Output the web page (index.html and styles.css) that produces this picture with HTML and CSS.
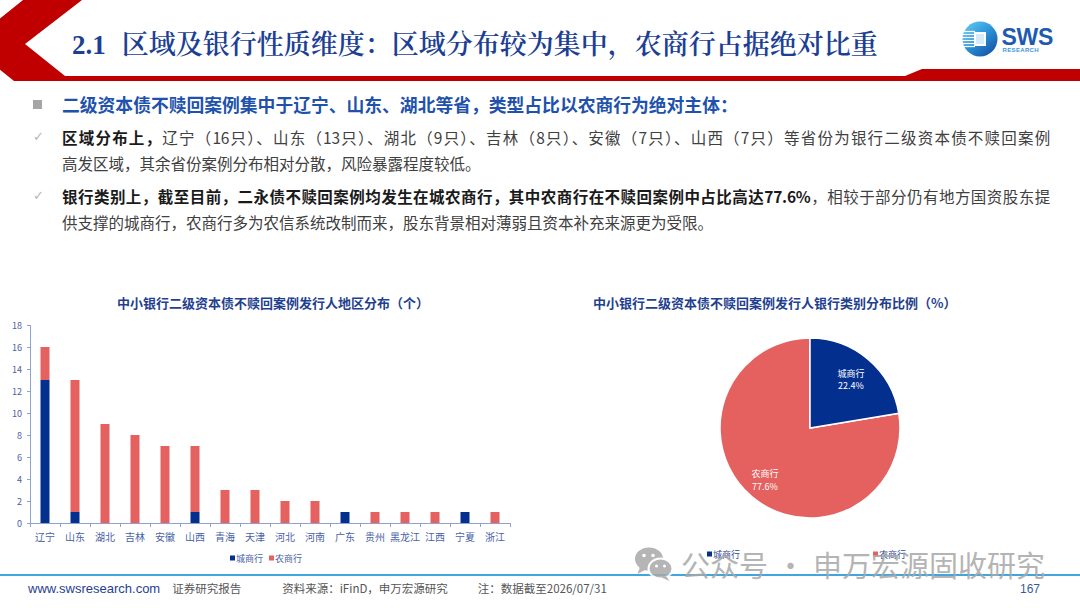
FILE: index.html
```html
<!DOCTYPE html>
<html lang="zh-CN">
<head>
<meta charset="utf-8">
<title>2.1 区域及银行性质维度</title>
<link rel="stylesheet" href="styles.css">
</head>
<body>
<div class="page">
  <header class="hdr">
    <svg class="hdr-bg" viewBox="0 0 1080 82" width="1080" height="82">
      <polygon points="23,0 82,0 25,44 65,76 905,76 922,69 1080,69 1080,81 14,81 -32,44" fill="#c00000"/>
    </svg>
    <h1 class="title"><span class="num">2.1</span>区域及银行性质维度：区域分布较为集中，农商行占据绝对比重</h1>
    <div class="logo">
      <svg class="logo-mark" viewBox="0 0 36 36" width="36" height="36">
        <defs>
          <linearGradient id="lgc" x1="0" y1="0" x2="0.8" y2="1">
            <stop offset="0" stop-color="#62d2f6"/>
            <stop offset="0.55" stop-color="#2a8fd6"/>
            <stop offset="1" stop-color="#1553a6"/>
          </linearGradient>
        </defs>
        <circle cx="18" cy="18" r="17.5" fill="url(#lgc)"/>
        <g stroke="#ffffff" stroke-width="1.3">
          <line x1="0" y1="10.5" x2="13" y2="10.5"/>
          <line x1="0" y1="13.5" x2="13" y2="13.5"/>
          <line x1="0" y1="16.5" x2="13" y2="16.5"/>
          <line x1="0" y1="19.5" x2="13" y2="19.5"/>
          <line x1="0" y1="22.5" x2="13" y2="22.5"/>
          <line x1="0" y1="25.5" x2="13" y2="25.5"/>
        </g>
        <rect x="12" y="11" width="12" height="14" fill="#ffffff"/>
        <rect x="14" y="13" width="8" height="10" fill="#d6ebfa"/>
      </svg>
      <div class="logo-text">
        <span class="sws">SWS</span>
        <span class="research">RESEARCH</span>
      </div>
    </div>
  </header>

  <section class="points">
    <div class="pt pt-head">
      <span class="mk sq"></span>
      <p class="txt lead">二级资本债不赎回案例集中于辽宁、山东、湖北等省，类型占比以农商行为绝对主体：</p>
    </div>
    <div class="pt">
      <span class="mk ck">✓</span>
      <p class="txt"><span class="ln"><b>区域分布上，</b>辽宁（16只）、山东（13只）、湖北（9只）、吉林（8只）、安徽（7只）、山西（7只）等省份为银行二级资本债不赎回案例</span>高发区域，其余省份案例分布相对分散，风险暴露程度较低。</p>
    </div>
    <div class="pt">
      <span class="mk ck">✓</span>
      <p class="txt"><span class="ln"><b>银行类别上，截至目前，二永债不赎回案例均发生在城农商行，其中农商行在不赎回案例中占比高达77.6%</b>，相较于部分仍有地方国资股东提</span>供支撑的城商行，农商行多为农信系统改制而来，股东背景相对薄弱且资本补充来源更为受限。</p>
    </div>
  </section>

  <section class="charts">
    <div class="chart bar">
      <div class="ctitle">中小银行二级资本债不赎回案例发行人地区分布（个）</div>
      <svg viewBox="0 0 540 256" width="540" height="256">
        <g class="axis">
          <line x1="30.5" y1="12" x2="30.5" y2="210.5"/>
          <line x1="30" y1="210.5" x2="510" y2="210.5"/>
          <line x1="27" y1="210.5" x2="30" y2="210.5"/>
          <line x1="27" y1="188.5" x2="30" y2="188.5"/>
          <line x1="27" y1="166.5" x2="30" y2="166.5"/>
          <line x1="27" y1="144.5" x2="30" y2="144.5"/>
          <line x1="27" y1="122.5" x2="30" y2="122.5"/>
          <line x1="27" y1="100.5" x2="30" y2="100.5"/>
          <line x1="27" y1="78.5" x2="30" y2="78.5"/>
          <line x1="27" y1="56.5" x2="30" y2="56.5"/>
          <line x1="27" y1="34.5" x2="30" y2="34.5"/>
          <line x1="27" y1="12.5" x2="30" y2="12.5"/>
          <line x1="30.5" y1="210" x2="30.5" y2="214"/>
          <line x1="60.5" y1="210" x2="60.5" y2="214"/>
          <line x1="90.5" y1="210" x2="90.5" y2="214"/>
          <line x1="120.5" y1="210" x2="120.5" y2="214"/>
          <line x1="150.5" y1="210" x2="150.5" y2="214"/>
          <line x1="180.5" y1="210" x2="180.5" y2="214"/>
          <line x1="210.5" y1="210" x2="210.5" y2="214"/>
          <line x1="240.5" y1="210" x2="240.5" y2="214"/>
          <line x1="270.5" y1="210" x2="270.5" y2="214"/>
          <line x1="300.5" y1="210" x2="300.5" y2="214"/>
          <line x1="330.5" y1="210" x2="330.5" y2="214"/>
          <line x1="360.5" y1="210" x2="360.5" y2="214"/>
          <line x1="390.5" y1="210" x2="390.5" y2="214"/>
          <line x1="420.5" y1="210" x2="420.5" y2="214"/>
          <line x1="450.5" y1="210" x2="450.5" y2="214"/>
          <line x1="480.5" y1="210" x2="480.5" y2="214"/>
          <line x1="510.5" y1="210" x2="510.5" y2="214"/>
        </g>
        <g class="ylab">
          <text x="22" y="210">0</text>
          <text x="22" y="188">2</text>
          <text x="22" y="166">4</text>
          <text x="22" y="144">6</text>
          <text x="22" y="122">8</text>
          <text x="22" y="100">10</text>
          <text x="22" y="78">12</text>
          <text x="22" y="56">14</text>
          <text x="22" y="34">16</text>
          <text x="22" y="12">18</text>
        </g>
        <g class="red">
          <rect x="40.5" y="34" width="9" height="33"/>
          <rect x="70.5" y="67" width="9" height="132"/>
          <rect x="100.5" y="111" width="9" height="99"/>
          <rect x="130.5" y="122" width="9" height="88"/>
          <rect x="160.5" y="133" width="9" height="77"/>
          <rect x="190.5" y="133" width="9" height="66"/>
          <rect x="220.5" y="177" width="9" height="33"/>
          <rect x="250.5" y="177" width="9" height="33"/>
          <rect x="280.5" y="188" width="9" height="22"/>
          <rect x="310.5" y="188" width="9" height="22"/>
          <rect x="370.5" y="199" width="9" height="11"/>
          <rect x="400.5" y="199" width="9" height="11"/>
          <rect x="430.5" y="199" width="9" height="11"/>
          <rect x="490.5" y="199" width="9" height="11"/>
        </g>
        <g class="blue">
          <rect x="40.5" y="67" width="9" height="143"/>
          <rect x="70.5" y="199" width="9" height="11"/>
          <rect x="190.5" y="199" width="9" height="11"/>
          <rect x="340.5" y="199" width="9" height="11"/>
          <rect x="460.5" y="199" width="9" height="11"/>
        </g>
        <g class="xlab">
          <text x="45" y="223">辽宁</text>
          <text x="75" y="223">山东</text>
          <text x="105" y="223">湖北</text>
          <text x="135" y="223">吉林</text>
          <text x="165" y="223">安徽</text>
          <text x="195" y="223">山西</text>
          <text x="225" y="223">青海</text>
          <text x="255" y="223">天津</text>
          <text x="285" y="223">河北</text>
          <text x="315" y="223">河南</text>
          <text x="345" y="223">广东</text>
          <text x="375" y="223">贵州</text>
          <text x="405" y="223">黑龙江</text>
          <text x="435" y="223">江西</text>
          <text x="465" y="223">宁夏</text>
          <text x="495" y="223">浙江</text>
        </g>
        <g class="legend">
          <rect class="blue" x="230" y="242.5" width="5" height="5"/>
          <text x="236" y="245">城商行</text>
          <rect class="red" x="269" y="242.5" width="5" height="5"/>
          <text x="275" y="245">农商行</text>
        </g>
      </svg>
    </div>
    <div class="chart pie">
      <div class="ctitle">中小银行二级资本债不赎回案例发行人银行类别分布比例（%）</div>
      <svg viewBox="0 0 540 256" width="540" height="256">
        <path class="red slice" d="M270,115 L358.8,100.36 A90,90 0 1 1 270,25 Z"/>
        <path class="blue slice" d="M270,115 L270,25 A90,90 0 0 1 358.8,100.36 Z"/>
        <g class="plab">
          <text x="311" y="60">城商行</text>
          <text x="311" y="72">22.4%</text>
          <text x="225" y="160">农商行</text>
          <text x="225" y="173">77.6%</text>
        </g>
        <g class="legend pleg">
          <rect class="blue" x="167" y="238.5" width="5" height="5"/>
          <text x="173" y="241">城商行</text>
          <rect class="red" x="333" y="238.5" width="5" height="5"/>
          <text x="339" y="241">农商行</text>
        </g>
      </svg>
    </div>
  </section>

  <footer class="ftr">
    <span class="url">www.swsresearch.com</span>
    <span class="ft rpt">证券研究报告</span>
    <span class="ft src">资料来源：iFinD，申万宏源研究</span>
    <span class="ft note">注：数据截至2026/07/31</span>
    <span class="pg">167</span>
  </footer>

  <div class="wm">
    <svg class="wm-icon" viewBox="0 0 40 36" width="40" height="36">
      <ellipse cx="15" cy="13" rx="14" ry="11.5" fill="#a9a9a9"/>
      <path d="M6 21 L3.5 28 L12 23.5 Z" fill="#a9a9a9"/>
      <ellipse cx="26.5" cy="22.5" rx="12" ry="10" fill="#a9a9a9" stroke="#ffffff" stroke-width="2"/>
      <path d="M32 30 L35.5 35 L27.5 31.5 Z" fill="#a9a9a9"/>
      <circle cx="10" cy="9.5" r="1.8" fill="#ffffff"/>
      <circle cx="19" cy="9.5" r="1.8" fill="#ffffff"/>
      <circle cx="22.5" cy="20" r="1.5" fill="#ffffff"/>
      <circle cx="30.5" cy="20" r="1.5" fill="#ffffff"/>
    </svg>
    <span class="wm-text">公众号<span class="dot">·</span>申万宏源固收研究</span>
  </div>
</div>
</body>
</html>
```

FILE: styles.css
```css
html, body {
  margin: 0;
  padding: 0;
  background: #ffffff;
}

body {
  font-family: "Noto Sans CJK SC", "Noto Sans", sans-serif;
}

.page {
  width: 1080px;
  height: 608px;
  position: relative;
  overflow: hidden;
  background: #ffffff;
}

/* Header */
.hdr {
  position: relative;
  height: 82px;
  display: flex;
  align-items: flex-start;
}

.hdr-bg {
  position: absolute;
  left: 0;
  top: 0;
  display: block;
}

.title {
  position: relative;
  margin: 27px 0 0 72px;
  font-family: "Liberation Serif", "Noto Serif CJK SC", "Noto Sans CJK SC", serif;
  font-weight: 600;
  font-size: 27px;
  line-height: 36px;
  color: #1c3f94;
  white-space: nowrap;
}

.title .num {
  margin-right: 16px;
}

.logo {
  position: relative;
  margin: 21px 27px 0 auto;
  display: flex;
  align-items: center;
  gap: 4px;
}

.logo-mark {
  display: block;
}

.logo-text {
  display: flex;
  flex-direction: column;
  margin-top: 2px;
}

.sws {
  font-family: "Liberation Sans", Arial, sans-serif;
  font-weight: 700;
  font-size: 23px;
  line-height: 18px;
  padding-top: 2px;
  color: #1e5bb0;
  letter-spacing: -0.3px;
}

.research {
  font-family: "Liberation Sans", Arial, sans-serif;
  font-weight: 700;
  font-size: 6px;
  line-height: 7px;
  margin-top: 1px;
  color: #3d95dc;
  letter-spacing: 0.35px;
  margin-left: 1px;
}

/* Bullet points */
.points {
  margin: 9px 30px 0 30px;
}

.pt {
  display: flex;
  margin-top: 7px;
}

.pt-head {
  margin-top: 0;
  margin-bottom: 3px;
}

.mk {
  flex: none;
  width: 32px;
}

.sq::before {
  content: "";
  display: block;
  width: 9px;
  height: 9px;
  margin: 9px 0 0 3px;
  background: #a6a6a6;
}

.ck {
  font-family: "DejaVu Sans", sans-serif;
  font-size: 13px;
  line-height: 26px;
  color: #b5b5b5;
  padding-left: 3px;
  box-sizing: border-box;
}

.txt {
  flex: 1;
  margin: 0;
  font-size: 15.5px;
  line-height: 26px;
  color: #404040;
  text-align: justify;
}

.txt b {
  font-weight: 700;
  color: #1a1a1a;
}

.txt .ln {
  display: block;
  text-align: justify;
  text-align-last: justify;
  letter-spacing: -0.2px;
}

.txt.lead {
  font-size: 17.8px;
  font-weight: 700;
  color: #2152ab;
  white-space: nowrap;
}

/* Charts */
.charts {
  display: grid;
  grid-template-columns: 540px 540px;
  margin-top: 58px;
}

.chart svg {
  display: block;
}

.ctitle {
  font-size: 13px;
  font-weight: 700;
  line-height: 20px;
  color: #1f3f8f;
  white-space: nowrap;
}

.bar .ctitle {
  text-align: center;
  padding-left: 6px;
}

.pie .ctitle {
  padding-left: 53px;
}

.axis line {
  stroke: #8ea3d3;
  stroke-width: 1;
}

.chart text {
  font-family: "Noto Sans CJK SC", "Liberation Sans", sans-serif;
}

.ylab text {
  font-size: 9px;
  fill: #4862a6;
  text-anchor: end;
  dominant-baseline: central;
}

.xlab text {
  font-size: 10px;
  fill: #4862a6;
  text-anchor: middle;
  dominant-baseline: central;
}

.red,
.red rect {
  fill: #e46160;
}

.blue,
.blue rect {
  fill: #03308f;
}

.legend text {
  font-size: 9px;
  fill: #4862a6;
  dominant-baseline: central;
}

.pleg text {
  fill: #2d4c9a;
}

.slice {
  stroke: #ffffff;
  stroke-width: 1.5;
  stroke-linejoin: miter;
}

.plab text {
  font-size: 9px;
  fill: #ffffff;
  text-anchor: middle;
  dominant-baseline: central;
}

/* Footer */
.ftr {
  margin-top: 5px;
  border-top: 2px solid #3fa7dd;
  display: flex;
  align-items: baseline;
  padding: 4px 40px 0 28px;
  line-height: 16px;
}

.url {
  font-family: "Liberation Sans", Arial, sans-serif;
  font-size: 13px;
  color: #1f3f8f;
}

.ft {
  font-size: 11.5px;
  color: #555555;
}

.rpt {
  margin-left: 12px;
}

.src {
  margin-left: 41px;
}

.note {
  margin-left: 30px;
}

.pg {
  margin-left: auto;
  font-family: "Liberation Sans", Arial, sans-serif;
  font-size: 12px;
  color: #3a5a9a;
}

/* Watermark overlay */
.wm {
  position: absolute;
  left: 634px;
  top: 546px;
  display: flex;
  align-items: center;
  gap: 7px;
  opacity: 0.85;
  pointer-events: none;
}

.wm-icon {
  display: block;
}

.wm-text {
  font-size: 29px;
  line-height: 36px;
  color: #a8a8a8;
  white-space: nowrap;
}

.wm-text .dot {
  margin: 0 8px;
}
```
